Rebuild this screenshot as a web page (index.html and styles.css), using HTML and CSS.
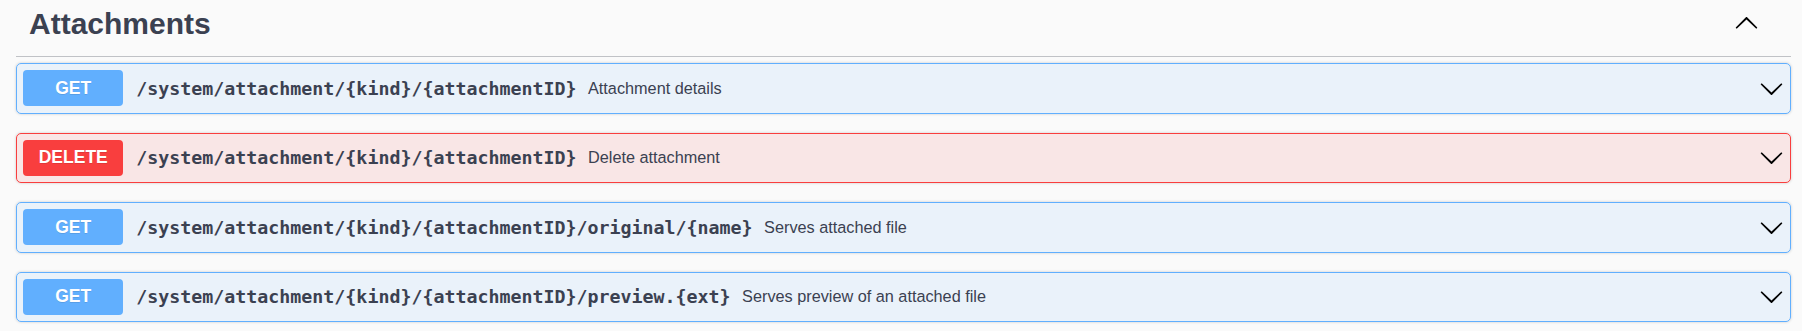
FILE: index.html
```html
<!DOCTYPE html>
<html lang="en">
<head>
    <meta charset="UTF-8">
    <meta name="viewport" content="width=device-width, initial-scale=1.0">
    <title>Attachments</title>
    <link rel="stylesheet" href="styles.css">
</head>
<body>
    <div class="tag-section">
        <!-- Cabeçalho do grupo -->
        <div class="tag-header">
            <h3>Attachments</h3>
            <button class="toggle">
                <svg class="arrow up" viewBox="0 0 20 20"><path d="M17.418 6.109c.272-.268.709-.268.979 0s.271.701 0 .969l-7.908 7.83c-.27.268-.707.268-.979 0l-7.908-7.83c-.27-.268-.27-.701 0-.969.271-.268.709-.268.979 0L10 13.25l7.418-7.141z"/></svg>
            </button>
        </div>

        <!-- Operações -->
        <div class="opblock get">
            <span class="method">GET</span>
            <span class="path">/system/attachment/{kind}/{attachmentID}</span>
            <span class="desc">Attachment details</span>
            <svg class="arrow" viewBox="0 0 20 20"><path d="M17.418 6.109c.272-.268.709-.268.979 0s.271.701 0 .969l-7.908 7.83c-.27.268-.707.268-.979 0l-7.908-7.83c-.27-.268-.27-.701 0-.969.271-.268.709-.268.979 0L10 13.25l7.418-7.141z"/></svg>
        </div>

        <div class="opblock delete">
            <span class="method">DELETE</span>
            <span class="path">/system/attachment/{kind}/{attachmentID}</span>
            <span class="desc">Delete attachment</span>
            <svg class="arrow" viewBox="0 0 20 20"><path d="M17.418 6.109c.272-.268.709-.268.979 0s.271.701 0 .969l-7.908 7.83c-.27.268-.707.268-.979 0l-7.908-7.83c-.27-.268-.27-.701 0-.969.271-.268.709-.268.979 0L10 13.25l7.418-7.141z"/></svg>
        </div>

        <div class="opblock get">
            <span class="method">GET</span>
            <span class="path">/system/attachment/{kind}/{attachmentID}/original/{name}</span>
            <span class="desc">Serves attached file</span>
            <svg class="arrow" viewBox="0 0 20 20"><path d="M17.418 6.109c.272-.268.709-.268.979 0s.271.701 0 .969l-7.908 7.83c-.27.268-.707.268-.979 0l-7.908-7.83c-.27-.268-.27-.701 0-.969.271-.268.709-.268.979 0L10 13.25l7.418-7.141z"/></svg>
        </div>

        <div class="opblock get">
            <span class="method">GET</span>
            <span class="path">/system/attachment/{kind}/{attachmentID}/preview.{ext}</span>
            <span class="desc">Serves preview of an attached file</span>
            <svg class="arrow" viewBox="0 0 20 20"><path d="M17.418 6.109c.272-.268.709-.268.979 0s.271.701 0 .969l-7.908 7.83c-.27.268-.707.268-.979 0l-7.908-7.83c-.27-.268-.27-.701 0-.969.271-.268.709-.268.979 0L10 13.25l7.418-7.141z"/></svg>
        </div>
    </div>
</body>
</html>
```

FILE: styles.css
```css
* {
    margin: 0;
    padding: 0;
    box-sizing: border-box;
}
body {
    background: #fafafa;
    font-family: "Liberation Sans", Arial, sans-serif;
    color: #3b4151;
}
.tag-section {
    padding: 0 11px 0 16px;
}
.tag-header {
    display: flex;
    align-items: center;
    height: 57px;
    padding: 0 32px 10px 13px;
    border-bottom: 1px solid rgba(59, 65, 81, 0.3);
    margin-bottom: 6px;
}
.tag-header h3 {
    flex: 1;
    font-size: 30px;
    font-weight: bold;
    line-height: 34px;
    padding-top: 1px;
}
.toggle {
    border: none;
    background: none;
    display: flex;
}
.arrow {
    width: 25px;
    height: 25px;
    fill: #000;
}
.arrow.up {
    transform: rotate(180deg);
}
.opblock {
    display: flex;
    align-items: center;
    height: 50.5px;
    padding: 0 6.25px;
    margin-bottom: 19px;
    border: 1px solid;
    border-radius: 5px;
    box-shadow: 0 0 3px rgba(0, 0, 0, 0.19);
}
.opblock.get {
    background: rgba(97, 175, 254, 0.1);
    border-color: #61affe;
}
.opblock.delete {
    background: rgba(249, 62, 62, 0.1);
    border-color: #f93e3e;
}
.method {
    display: flex;
    align-items: center;
    justify-content: center;
    width: 100px;
    height: 36px;
    border-radius: 4px;
    color: #fff;
    font-size: 17.5px;
    font-weight: bold;
    text-shadow: 0 1px 0 rgba(0, 0, 0, 0.1);
}
.get .method {
    background: #61affe;
}
.delete .method {
    background: #f93e3e;
}
.path {
    padding: 0 11.5px 0 13px;
    font-family: "DejaVu Sans Mono", monospace;
    font-size: 18.3px;
    font-weight: bold;
    color: #3b4151;
}
.desc {
    flex: 1;
    font-size: 16.25px;
    color: #3b4151;
}
```
